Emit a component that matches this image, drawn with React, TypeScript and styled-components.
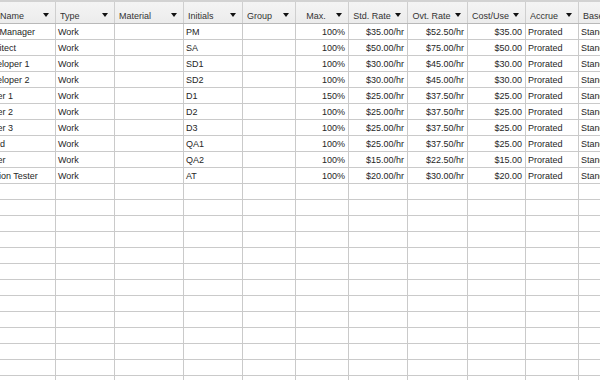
import React from "react";
import styled, { createGlobalStyle } from "styled-components";

const GlobalStyle = createGlobalStyle`
  html, body { margin: 0; padding: 0; background: #ffffff; }
  body { overflow: hidden; }
`;

type Align = "left" | "right" | "center";

interface Column {
  key: string;
  title: string;
  width: number;
  align: Align;
  headAlign: Align;
}

const columns: Column[] = [
  { key: "name", title: "Full Name", width: 77, align: "left", headAlign: "left" },
  { key: "type", title: "Type", width: 59, align: "left", headAlign: "left" },
  { key: "material", title: "Material", width: 69, align: "left", headAlign: "left" },
  { key: "initials", title: "Initials", width: 59, align: "left", headAlign: "left" },
  { key: "group", title: "Group", width: 53, align: "left", headAlign: "left" },
  { key: "max", title: "Max.", width: 53, align: "right", headAlign: "center" },
  { key: "std", title: "Std. Rate", width: 59, align: "right", headAlign: "center" },
  { key: "ovt", title: "Ovt. Rate", width: 60, align: "right", headAlign: "center" },
  { key: "cost", title: "Cost/Use", width: 58, align: "right", headAlign: "center" },
  { key: "accrue", title: "Accrue", width: 53, align: "left", headAlign: "left" },
  { key: "base", title: "Base Calendar", width: 80, align: "left", headAlign: "left" },
];

const data: string[][] = [
  ["Proj Manager", "Work", "", "PM", "", "100%", "$35.00/hr", "$52.50/hr", "$35.00", "Prorated", "Standard"],
  ["Architect", "Work", "", "SA", "", "100%", "$50.00/hr", "$75.00/hr", "$50.00", "Prorated", "Standard"],
  ["Developer 1", "Work", "", "SD1", "", "100%", "$30.00/hr", "$45.00/hr", "$30.00", "Prorated", "Standard"],
  ["Developer 2", "Work", "", "SD2", "", "100%", "$30.00/hr", "$45.00/hr", "$30.00", "Prorated", "Standard"],
  ["Tester 1", "Work", "", "D1", "", "150%", "$25.00/hr", "$37.50/hr", "$25.00", "Prorated", "Standard"],
  ["Tester 2", "Work", "", "D2", "", "100%", "$25.00/hr", "$37.50/hr", "$25.00", "Prorated", "Standard"],
  ["Tester 3", "Work", "", "D3", "", "100%", "$25.00/hr", "$37.50/hr", "$25.00", "Prorated", "Standard"],
  ["Board", "Work", "", "QA1", "", "100%", "$25.00/hr", "$37.50/hr", "$25.00", "Prorated", "Standard"],
  ["Tester", "Work", "", "QA2", "", "100%", "$15.00/hr", "$22.50/hr", "$15.00", "Prorated", "Standard"],
  ["Version Tester", "Work", "", "AT", "", "100%", "$20.00/hr", "$30.00/hr", "$20.00", "Prorated", "Standard"],
];

const EMPTY_ROWS = 13;

const template = columns.map((c) => `${c.width}px`).join(" ");

const Viewport = styled.div`
  width: 600px;
  height: 380px;
  overflow: hidden;
  background: #ffffff;
  font-family: "Liberation Sans", Arial, sans-serif;
  font-size: 9px;
  color: #262626;
`;

/* horizontally scrolled sheet: the first column starts left of the view */
const Sheet = styled.div`
  margin-left: -21px;
  width: max-content;
`;

const HeaderRow = styled.div`
  display: grid;
  grid-template-columns: ${template};
  height: 24px;
  box-sizing: border-box;
  border-top: 2px solid #d2d2d2;
  border-bottom: 1px solid #b9b9b9;
  background: linear-gradient(#f4f4f4, #ececec);
`;

const HeaderCell = styled.div`
  display: flex;
  align-items: flex-end;
  box-sizing: border-box;
  padding: 0 6px 0 4px;
  border-right: 1px solid #cfcfcf;
  overflow: hidden;
  color: #333333;
`;

const HeaderLabel = styled.span<{ $align: Align }>`
  flex: 1;
  min-width: 0;
  white-space: nowrap;
  overflow: hidden;
  line-height: 13px;
  text-align: ${(p) => p.$align};
  padding-right: 4px;
`;

const SortArrow = styled.span`
  flex: none;
  width: 0;
  height: 0;
  margin-bottom: 6px;
  border-left: 3.5px solid transparent;
  border-right: 3.5px solid transparent;
  border-top: 4px solid #111111;
`;

const Row = styled.div`
  display: grid;
  grid-template-columns: ${template};
  height: 16px;
  box-sizing: border-box;
  border-bottom: 1px solid #cacaca;
`;

const Cell = styled.div<{ $align: Align }>`
  box-sizing: border-box;
  border-right: 1px solid #cacaca;
  padding: 1px 3px 0 2px;
  line-height: 15px;
  white-space: nowrap;
  overflow: hidden;
  text-align: ${(p) => p.$align};
`;

export default function App() {
  return (
    <>
      <GlobalStyle />
      <Viewport>
        <Sheet>
          <HeaderRow>
            {columns.map((c) => (
              <HeaderCell key={c.key}>
                <HeaderLabel $align={c.headAlign}>{c.title}</HeaderLabel>
                <SortArrow />
              </HeaderCell>
            ))}
          </HeaderRow>
          {data.map((r, i) => (
            <Row key={i}>
              {columns.map((c, j) => (
                <Cell key={c.key} $align={c.align}>
                  {r[j]}
                </Cell>
              ))}
            </Row>
          ))}
          {Array.from({ length: EMPTY_ROWS }).map((_, i) => (
            <Row key={`e${i}`}>
              {columns.map((c) => (
                <Cell key={c.key} $align={c.align} />
              ))}
            </Row>
          ))}
        </Sheet>
      </Viewport>
    </>
  );
}
